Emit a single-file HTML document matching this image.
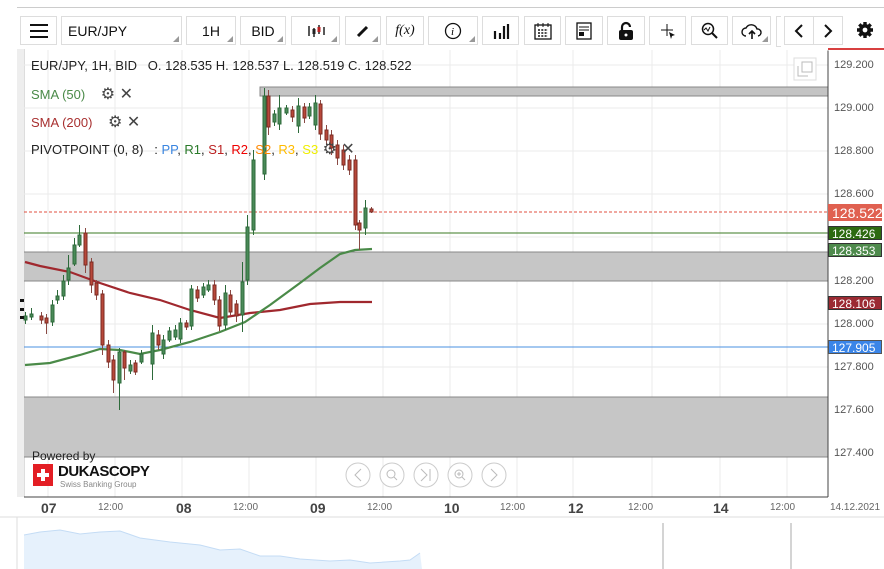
<!DOCTYPE html>
<html><head><meta charset="utf-8"><style>
body{margin:0;width:884px;height:569px;overflow:hidden;background:#fff;font-family:"Liberation Sans",sans-serif;position:relative}
.b{position:absolute;top:16px;height:29px;border:1px solid #ddd;box-sizing:border-box;background:#fff;display:flex;align-items:center;justify-content:center;font-size:14px;color:#111}
.tri{position:absolute;right:2px;bottom:2px;width:0;height:0;border-left:6px solid transparent;border-bottom:6px solid #999}
.ax{position:absolute;left:834px;font-size:11px;color:#555}
.pl{position:absolute;left:828px;width:54px;height:14px;color:#fff;font-size:12px;line-height:14px;padding-left:3px;box-sizing:border-box;border:1px solid #333}
.tl{position:absolute;top:502px;font-size:10px;color:#666}
.td{position:absolute;top:500px;font-size:14px;color:#444;font-weight:bold}
.lg{position:absolute;left:31px;font-size:13px}
</style></head><body>
<div style="position:absolute;left:17px;top:7px;width:867px;height:1px;background:#ccc"></div>
<div class="b" style="left:20px;width:37px"><div style="width:18px;height:2px;background:#111;box-shadow:0 -6px 0 #111,0 6px 0 #111"></div></div>
<div class="b" style="left:61px;width:121px;justify-content:flex-start;padding-left:6px">EUR/JPY<span class="tri"></span></div>
<div class="b" style="left:186px;width:50px">1H<span class="tri"></span></div>
<div class="b" style="left:240px;width:46px">BID<span class="tri"></span></div>
<div class="b" style="left:291px;width:49px"><svg width="20" height="14"><path d="M3 2v10M8 4v9M13 1v9M18 3v8" stroke="#222" stroke-width="1.5"/><rect x="6.5" y="5" width="3" height="5" fill="#222"/><rect x="11.5" y="3" width="3" height="5" fill="#b22"/></svg><span class="tri"></span></div>
<div class="b" style="left:345px;width:36px"><svg width="14" height="14"><path d="M2 12L11 3" stroke="#111" stroke-width="3"/></svg><span class="tri"></span></div>
<div class="b" style="left:386px;width:38px;font-family:'Liberation Serif',serif;font-style:italic">f(x)</div>
<div class="b" style="left:428px;width:50px"><svg width="18" height="18"><circle cx="9" cy="9" r="7.5" fill="none" stroke="#111" stroke-width="1.3"/><text x="7" y="13" font-size="11" font-style="italic" font-family="Liberation Serif">i</text></svg><span class="tri"></span></div>
<div class="b" style="left:482px;width:37px"><svg width="18" height="16"><path d="M3 16V8M8 16V10M12 16V3M16 16V1" stroke="#111" stroke-width="2.2"/></svg></div>
<div class="b" style="left:524px;width:37px"><svg width="20" height="20"><rect x="2" y="4" width="16" height="14" fill="none" stroke="#111" stroke-width="1.3"/><path d="M5 2v4M10 2v4M15 2v4" stroke="#111"/><path d="M5 9h10M5 12h10M5 15h10" stroke="#111" stroke-dasharray="2 1.3" stroke-width="1.5"/></svg></div>
<div class="b" style="left:565px;width:38px"><svg width="16" height="18"><rect x="1" y="1" width="14" height="16" fill="none" stroke="#111" stroke-width="1.3"/><path d="M3 5h10M3 8h10" stroke="#111"/><rect x="3" y="10" width="5" height="4" fill="#111"/></svg></div>
<div class="b" style="left:607px;width:38px"><svg width="16" height="20"><path d="M4 9V6a4 4 0 0 1 8 0" fill="none" stroke="#111" stroke-width="2.2"/><rect x="1" y="9" width="14" height="10" rx="2" fill="#111"/><circle cx="8" cy="14" r="1.5" fill="#fff"/></svg></div>
<div class="b" style="left:649px;width:37px"><svg width="18" height="18"><path d="M8 2v12M2 8h12" stroke="#111"/><path d="M10 10l6 3-3 1-1 3z" fill="#111"/></svg></div>
<div class="b" style="left:691px;width:37px"><svg width="18" height="18"><circle cx="7" cy="7" r="5.5" fill="none" stroke="#111" stroke-width="1.5"/><path d="M11 11l5 5" stroke="#111" stroke-width="2"/><path d="M3 8l2-2 2 3 2-4" fill="none" stroke="#111"/></svg></div>
<div class="b" style="left:732px;width:39px"><svg width="22" height="18"><path d="M5 14a4 4 0 0 1 0-8 6 6 0 0 1 11 1 3.5 3.5 0 0 1 1 7" fill="none" stroke="#111" stroke-width="1.4"/><path d="M11 17V9M8 12l3-3 3 3" fill="none" stroke="#111" stroke-width="1.6"/></svg><span class="tri"></span></div>
<div style="position:absolute;left:776px;top:16px;width:4px;height:29px;border:1px solid #ddd;border-right:0"></div>
<div class="b" style="left:784px;width:30px"><svg width="12" height="16"><path d="M9 2L3 8l6 6" fill="none" stroke="#111" stroke-width="2"/></svg></div>
<div class="b" style="left:813px;width:30px"><svg width="12" height="16"><path d="M3 2l6 6-6 6" fill="none" stroke="#111" stroke-width="2"/></svg></div>
<svg style="position:absolute;left:856px;top:21px" width="18" height="18" viewBox="0 0 18 18"><g fill="#111"><circle cx="9" cy="9" r="6"/><g stroke="#111" stroke-width="3.4"><path d="M9 1v16M1 9h16M3.3 3.3l11.4 11.4M14.7 3.3L3.3 14.7"/></g></g><circle cx="9" cy="9" r="2.4" fill="#fff"/></svg>

<div style="position:absolute;left:17px;top:49px;width:7px;height:448px;background:#eee;border-right:1px solid #ddd"></div>
<svg style="position:absolute;left:0;top:0" width="884" height="569">
<g stroke="#ebebeb" stroke-width="1">
<path d="M48 50V497M115 50V497M182 50V497M249 50V497M316 50V497M383 50V497M450 50V497M517 50V497M573 50V497M652 50V497M720 50V497M787 50V497"/>
<path d="M24 65H828M24 108H828M24 151H828M24 194H828M24 237H828M24 281H828M24 324H828M24 367H828M24 410H828M24 453H828"/>
</g>
<rect x="260" y="87" width="568" height="9" fill="#c4c4c4" stroke="#888"/>
<rect x="24" y="252" width="804" height="29" fill="#c6c6c6"/><path d="M24 252H828M24 281H828" stroke="#888"/>
<rect x="24" y="397" width="804" height="60" fill="#c6c6c6"/><path d="M24 397H828M24 457H828" stroke="#888"/>
<path d="M24 212H828" stroke="#e05040" stroke-dasharray="3 2"/>
<path d="M24 233H828" stroke="#3a7a20"/>
<path d="M24 347H828" stroke="#4a90e2"/>
<path d="M25 262L40 266L70 272L100 283L130 293L160 300L190 310L220 318L250 313L280 310L310 304L340 302L372 302" fill="none" stroke="#a0282e" stroke-width="2.2"/>
<path d="M25 365L50 363L80 355L100 349L120 350L140 354L160 350L190 342L220 332L245 322L270 305L300 283L320 268L340 254L355 250L372 249" fill="none" stroke="#4a8a48" stroke-width="2.2"/>
<path d="M25.5 312v12M31.5 308v12M52.5 300v26M57.5 290v14M63.5 275v25M68.5 255v30M74.5 238v28M79.5 225v22M119.5 348v62M130.5 360v14M141.5 350v14M152.5 325v55M163.5 335v24M169.5 327v15M175.5 325v15M180.5 318v25M191.5 285v45M203.5 283v15M208.5 280v12M225.5 285v45M242.5 262v70M247.5 215v70M253.5 150v85M264.5 88v92M274.5 110v16M279.5 95v35M286.5 105v10M298.5 98v35M309.5 103v16M315.5 95v35M365.5 200v35" stroke="#2d6a3a"/>
<path d="M41.5 312v12M46.5 314v20M85.5 228v45M91.5 258v35M96.5 280v20M102.5 290v65M108.5 340v28M113.5 355v38M124.5 350v30M135.5 360v15M158.5 330v20M186.5 320v10M197.5 286v16M214.5 280v25M219.5 296v35M230.5 290v25M236.5 300v22M268.5 90v45M292.5 106v16M304.5 103v20M320.5 100v40M326.5 125v20M331.5 130v25M337.5 140v25M343.5 145v25M349.5 155v20M355.5 155v75M359.5 220v30M371.5 207v6" stroke="#8a4a44"/>
<g stroke-width="1">
<g fill="#4a8a58" stroke="#2d6a3a">
<rect x="24" y="316" width="3" height="4"/><rect x="30" y="314" width="3" height="3"/><rect x="51" y="305" width="3" height="17"/><rect x="56" y="296" width="3" height="4"/><rect x="62" y="281" width="3" height="15"/><rect x="67" y="268" width="3" height="12"/><rect x="73" y="245" width="3" height="19"/><rect x="78" y="235" width="3" height="10"/>
<rect x="118" y="352" width="3" height="31"/><rect x="129" y="365" width="3" height="6"/><rect x="140" y="354" width="3" height="8"/><rect x="151" y="333" width="3" height="31"/><rect x="162" y="340" width="3" height="14"/><rect x="168" y="331" width="3" height="9"/><rect x="174" y="330" width="3" height="7"/><rect x="179" y="323" width="3" height="16"/><rect x="190" y="289" width="3" height="37"/><rect x="202" y="287" width="3" height="8"/><rect x="207" y="285" width="3" height="5"/><rect x="224" y="293" width="3" height="32"/><rect x="241" y="282" width="3" height="33"/><rect x="246" y="227" width="3" height="53"/><rect x="252" y="160" width="3" height="70"/><rect x="263" y="96" width="3" height="78"/><rect x="273" y="114" width="3" height="8"/><rect x="278" y="108" width="3" height="16"/><rect x="285" y="108" width="3" height="5"/><rect x="297" y="106" width="3" height="20"/><rect x="308" y="107" width="3" height="9"/><rect x="314" y="103" width="3" height="22"/><rect x="364" y="208" width="3" height="20"/>
</g>
<g fill="#b8483a" stroke="#7a2a22">
<rect x="40" y="316" width="3" height="4"/><rect x="45" y="318" width="3" height="5"/><rect x="84" y="233" width="3" height="32"/><rect x="90" y="262" width="3" height="23"/><rect x="95" y="283" width="3" height="12"/><rect x="101" y="294" width="3" height="51"/><rect x="107" y="345" width="3" height="17"/><rect x="112" y="360" width="3" height="20"/><rect x="123" y="352" width="3" height="16"/><rect x="134" y="363" width="3" height="9"/><rect x="157" y="335" width="3" height="10"/><rect x="185" y="323" width="3" height="4"/><rect x="196" y="290" width="3" height="8"/><rect x="213" y="285" width="3" height="15"/><rect x="218" y="300" width="3" height="26"/><rect x="229" y="295" width="3" height="17"/><rect x="235" y="304" width="3" height="12"/><rect x="267" y="96" width="3" height="31"/><rect x="291" y="110" width="3" height="7"/><rect x="303" y="107" width="3" height="11"/><rect x="319" y="104" width="3" height="30"/><rect x="325" y="130" width="3" height="10"/><rect x="330" y="135" width="3" height="13"/><rect x="336" y="145" width="3" height="13"/><rect x="342" y="150" width="3" height="15"/><rect x="348" y="160" width="3" height="10"/><rect x="354" y="160" width="3" height="65"/><rect x="358" y="223" width="3" height="7"/><rect x="370" y="209" width="3" height="3"/>
</g>
</g>
<path d="M828 50V497M24 497H828" stroke="#444"/>
<path d="M815 50H884" stroke="#fff"/><path d="M828 49H884" stroke="#c00" stroke-width="1.5"/>
<rect x="794" y="58" width="22" height="22" fill="#fff" stroke="#ddd"/>
<path d="M798 66v10h10M802 62h10v10h-10z" fill="none" stroke="#bbb"/>
<g fill="#fff" stroke="#ccc"><circle cx="358" cy="475" r="12"/><circle cx="392" cy="475" r="12"/><circle cx="426" cy="475" r="12"/><circle cx="460" cy="475" r="12"/><circle cx="494" cy="475" r="12"/></g>
<g fill="none" stroke="#bbb"><path d="M361 469l-6 6 6 6"/><circle cx="391" cy="474" r="4"/><path d="M394 477l3 3"/><path d="M421 469l6 6-6 6M430 469v12"/><circle cx="459" cy="474" r="4"/><path d="M462 477l3 3M457 474h4M459 472v4"/><path d="M491 469l6 6-6 6"/></g>
<rect x="33" y="464" width="20" height="22" fill="#e31e24"/><path d="M43 469v12M37 475h12" stroke="#fff" stroke-width="4"/>
<path d="M0 517H884" stroke="#ddd"/>
<path d="M24 535L40 532L60 530L80 534L100 532L120 531L140 538L170 542L200 545L220 550L240 549L260 556L280 556L300 559L330 561L350 560L370 563L400 561L410 560L420 553L422 569L24 569Z" fill="#e6f1fc"/>
<path d="M24 535L40 532L60 530L80 534L100 532L120 531L140 538L170 542L200 545L220 550L240 549L260 556L280 556L300 559L330 561L350 560L370 563L400 561L410 560L420 553" fill="none" stroke="#c4dcf5"/>
<path d="M663 523V569M791 523V569" stroke="#aaa"/>
<path d="M17 517V569" stroke="#ddd"/>
<rect x="20" y="299" width="4" height="3" fill="#111"/><rect x="20" y="308" width="4" height="3" fill="#111"/><rect x="20" y="316" width="4" height="3" fill="#111"/>
</svg>
<div style="position:absolute;left:32px;top:449px;font-size:12px;color:#222">Powered by</div>
<div style="position:absolute;left:58px;top:463px;font-size:15px;font-weight:bold;color:#111;letter-spacing:-0.5px">DUKASCOPY</div>
<div style="position:absolute;left:60px;top:480px;font-size:8px;color:#888">Swiss Banking Group</div>

<div class="lg" style="top:58px;color:#222;font-size:13px">EUR/JPY, 1H, BID &nbsp; O. 128.535 H. 128.537 L. 128.519 C. 128.522</div>
<div class="lg" style="top:84px;color:#4a8a48">SMA (50) <span style="color:#444;margin-left:12px;font-size:16px">⚙ ✕</span></div>
<div class="lg" style="top:112px;color:#a83030">SMA (200) <span style="color:#444;margin-left:12px;font-size:16px">⚙ ✕</span></div>
<div class="lg" style="top:139px;color:#222">PIVOTPOINT (0, 8) &nbsp; : <span style="color:#3a85e0">PP</span>, <span style="color:#2a7a2a">R1</span>, <span style="color:#b22">S1</span>, <span style="color:#e00">R2</span>, <span style="color:#f80">S2</span>, <span style="color:#fb0">R3</span>, <span style="color:#ee0">S3</span><span style="color:#444;font-size:16px"> ⚙ ✕</span></div>

<div class="ax" style="top:59px">129.200</div><div class="ax" style="top:102px">129.000</div><div class="ax" style="top:145px">128.800</div><div class="ax" style="top:188px">128.600</div><div class="ax" style="top:275px">128.200</div><div class="ax" style="top:318px">128.000</div><div class="ax" style="top:361px">127.800</div><div class="ax" style="top:404px">127.600</div><div class="ax" style="top:447px">127.400</div>
<div class="pl" style="top:204px;height:17px;background:#e06050;border-color:#e06050;font-size:14px;line-height:16px">128.522</div>
<div class="pl" style="top:226px;background:#2d6a10">128.426</div>
<div class="pl" style="top:243px;background:#4e8a4c">128.353</div>
<div class="pl" style="top:296px;background:#9b2a32">128.106</div>
<div class="pl" style="top:340px;background:#3a85e8;border-color:#555">127.905</div>

<div class="td" style="left:41px">07</div><div class="tl" style="left:98px">12:00</div>
<div class="td" style="left:176px">08</div><div class="tl" style="left:233px">12:00</div>
<div class="td" style="left:310px">09</div><div class="tl" style="left:367px">12:00</div>
<div class="td" style="left:444px">10</div><div class="tl" style="left:500px">12:00</div>
<div class="td" style="left:568px">12</div><div class="tl" style="left:628px">12:00</div>
<div class="td" style="left:713px">14</div><div class="tl" style="left:770px">12:00</div>
<div class="tl" style="left:830px">14.12.2021</div>
</body></html>
